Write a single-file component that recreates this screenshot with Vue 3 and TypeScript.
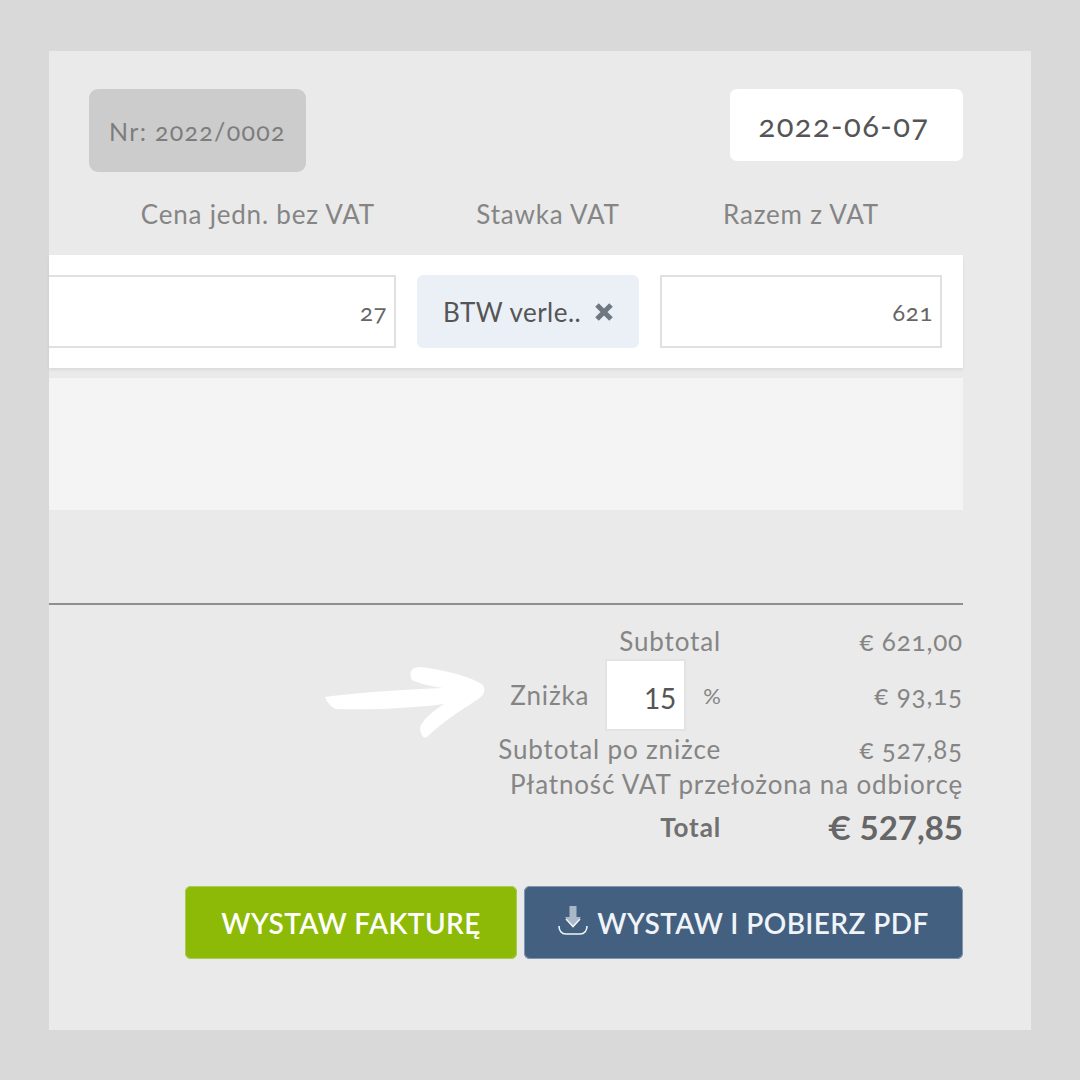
<template>
  <div class="page">
    <section class="panel">
      <div class="top-row">
        <div class="number-badge">{{ invoiceNumber }}</div>
        <div class="date-box">{{ invoiceDate }}</div>
      </div>

      <div class="col-grid head-row">
        <span class="head-price">Cena jedn. bez VAT</span>
        <span class="head-vat">Stawka VAT</span>
        <span class="head-total">Razem z VAT</span>
      </div>

      <div class="col-grid item-row">
        <div class="field">27</div>
        <div class="vat-chip">
          <span>BTW verle..</span>
          <svg class="chip-x" width="20" height="20" viewBox="0 0 20 20">
            <path d="M3 3L17 17M17 3L3 17" />
          </svg>
        </div>
        <div class="field">621</div>
      </div>

      <div class="empty-band"></div>

      <div class="divider"></div>

      <div class="summary">
        <div class="sum-row line-subtotal">
          <span class="sum-label">Subtotal</span>
          <span class="sum-value">€ 621,00</span>
        </div>
        <div class="sum-row line-discount">
          <div class="sum-label discount-label">
            <span>Zniżka</span>
            <div class="discount-input">15</div>
            <span class="percent">%</span>
          </div>
          <span class="sum-value">€ 93,15</span>
        </div>
        <div class="sum-row line-after">
          <span class="sum-label">Subtotal po zniżce</span>
          <span class="sum-value">€ 527,85</span>
        </div>
        <div class="reverse-note">Płatność VAT przełożona na odbiorcę</div>
        <div class="sum-row line-total">
          <span class="sum-label total-label">Total</span>
          <span class="sum-value total-value">€ 527,85</span>
        </div>
      </div>

      <div class="actions">
        <button class="btn btn-green">WYSTAW FAKTURĘ</button>
        <button class="btn btn-blue">
          <svg class="dl-icon" width="30" height="30" viewBox="0 0 30 30">
            <path class="dl-fill" d="M11.500 0h7v11h4.500l-8 9-8-9h4.500z" />
            <path class="dl-line" d="M8 13l7 7.500 7-7.500" />
            <path class="dl-line" d="M1 20c0 4.500 2.500 8 7 8h14c4.500 0 7-3.500 7-8" />
          </svg>
          <span>WYSTAW I POBIERZ PDF</span>
        </button>
      </div>

      <!-- white hand drawn arrow placed on top of the screenshot -->
      <svg class="arrow" width="170" height="76" viewBox="0 0 170 76">
        <path
          d="M1 31C30 27 70 24 119 22C100 19 92 16 88 14C84 6 88 1 96 1C120 4 146 10 159 19C161 24 161 27 157 31C148 38 125 50 103 71C100 73 97 70 96 62C98 54 108 46 120 38C90 42 50 44 12 43C7 41 3 36 1 31Z"
        />
      </svg>
    </section>
  </div>
</template>

<script setup lang="ts">
const invoiceNumber = 'Nr: 2022/0002'
const invoiceDate = '2022-06-07'
</script>

<style>
html,
body {
  margin: 0;
  background: #d9d9d9;
}
</style>

<style scoped>
.page {
  width: 1080px;
  height: 1080px;
  box-sizing: border-box;
  padding: 51px 49px 50px;
  background: #d9d9d9;
  font-family: Lato, "Open Sans", sans-serif;
  font-feature-settings: "onum";
  color: #808080;
}

.panel {
  position: relative;
  height: 979px;
  box-sizing: border-box;
  padding: 38px 68px 0 0;
  background: #eaeaea;
}

.top-row {
  display: flex;
  justify-content: space-between;
  align-items: flex-start;
  padding-left: 40px;
}

.number-badge {
  width: 217px;
  height: 83px;
  display: flex;
  align-items: center;
  justify-content: center;
  border-radius: 9px;
  background: #cccccc;
  color: #7d7d7d;
  font-size: 25px;
  letter-spacing: 1.3px;
}

.date-box {
  width: 233px;
  height: 72px;
  box-sizing: border-box;
  padding-right: 5px;
  display: flex;
  align-items: center;
  justify-content: center;
  border-radius: 7px;
  background: #fff;
  color: #555;
  font-size: 31px;
  letter-spacing: 1.4px;
}

.col-grid {
  display: grid;
  grid-template-columns: 347px 222px 282px;
  column-gap: 21px;
  padding-right: 21px;
}

.head-row {
  height: 83px;
  align-items: center;
  font-size: 26px;
  letter-spacing: 0.8px;
  color: #858585;
}

.head-price {
  text-align: right;
  padding-right: 21px;
}

.head-vat {
  text-align: center;
  padding-left: 40px;
}

.head-total {
  text-align: center;
}

.item-row {
  height: 113px;
  align-items: center;
  background: #fff;
  box-shadow: 0 2px 3px rgba(0, 0, 0, 0.07);
}

.field {
  height: 73px;
  box-sizing: border-box;
  display: flex;
  align-items: center;
  justify-content: flex-end;
  padding-right: 7px;
  border: 2px solid #e0e0e0;
  color: #666;
  font-size: 24px;
  letter-spacing: 0.6px;
}

.item-row .field:first-child {
  border-left: none;
}

.vat-chip {
  height: 73px;
  display: flex;
  align-items: center;
  gap: 13px;
  padding-left: 26px;
  border-radius: 6px;
  background: #ebf0f6;
  color: #555;
  font-size: 26px;
  letter-spacing: 0.5px;
}

.chip-x path {
  fill: none;
  stroke: #6f7880;
  stroke-width: 5;
}

.empty-band {
  height: 132px;
  margin-top: 10px;
  background: #f4f4f4;
}

.divider {
  height: 2px;
  margin-top: 93px;
  background: #8f8f8f;
}

.summary {
  display: flex;
  flex-direction: column;
  margin-top: 17px;
  font-size: 26px;
  letter-spacing: 0.85px;
  color: #858585;
}

.sum-row {
  display: flex;
  justify-content: flex-end;
  align-items: center;
}

.sum-label {
  text-align: right;
}

.sum-value {
  width: 242px;
  text-align: right;
}

.line-subtotal {
  height: 37px;
}

.line-discount {
  height: 72px;
}

.discount-label {
  display: flex;
  align-items: center;
}

.discount-input {
  width: 81px;
  height: 72px;
  box-sizing: border-box;
  display: flex;
  align-items: center;
  justify-content: flex-end;
  margin: 0 17px 0 16px;
  padding: 6px 8px 0 0;
  border: 2px solid #e3e3e3;
  background: #fff;
  color: #555;
  font-size: 28px;
  letter-spacing: 0;
  font-feature-settings: "lnum";
}

.percent {
  font-size: 22px;
  letter-spacing: 0;
}

.line-after {
  height: 36px;
}

.reverse-note {
  height: 34px;
  line-height: 34px;
  text-align: right;
}

.line-total {
  height: 52px;
}

.total-label {
  font-weight: 700;
  color: #707070;
}

.total-value {
  font-size: 33px;
  font-weight: 700;
  letter-spacing: 0;
  color: #666;
  font-feature-settings: "lnum";
}

.actions {
  display: flex;
  justify-content: flex-end;
  gap: 7px;
  margin-top: 33px;
}

.btn {
  height: 73px;
  display: flex;
  align-items: center;
  justify-content: center;
  border: none;
  border-radius: 6px;
  padding: 0;
  font-family: inherit;
  font-size: 28px;
  font-weight: 600;
  letter-spacing: 0.4px;
  color: #fff;
}

.btn-green {
  width: 332px;
  background: #8cba06;
  box-shadow: inset 0 0 0 1px #a9cc55;
}

.btn-blue {
  width: 439px;
  gap: 9px;
  background: #436080;
  box-shadow: inset 0 0 0 1px #7f96ad;
  color: #f0f4f8;
}

.dl-icon {
  margin-top: -4px;
}

.dl-fill {
  fill: #a9b8c6;
}

.dl-line {
  fill: none;
  stroke: #f0f4f8;
  stroke-width: 1.6;
}

.arrow {
  position: absolute;
  left: 275px;
  top: 615px;
}

.arrow path {
  fill: #fff;
}
</style>
